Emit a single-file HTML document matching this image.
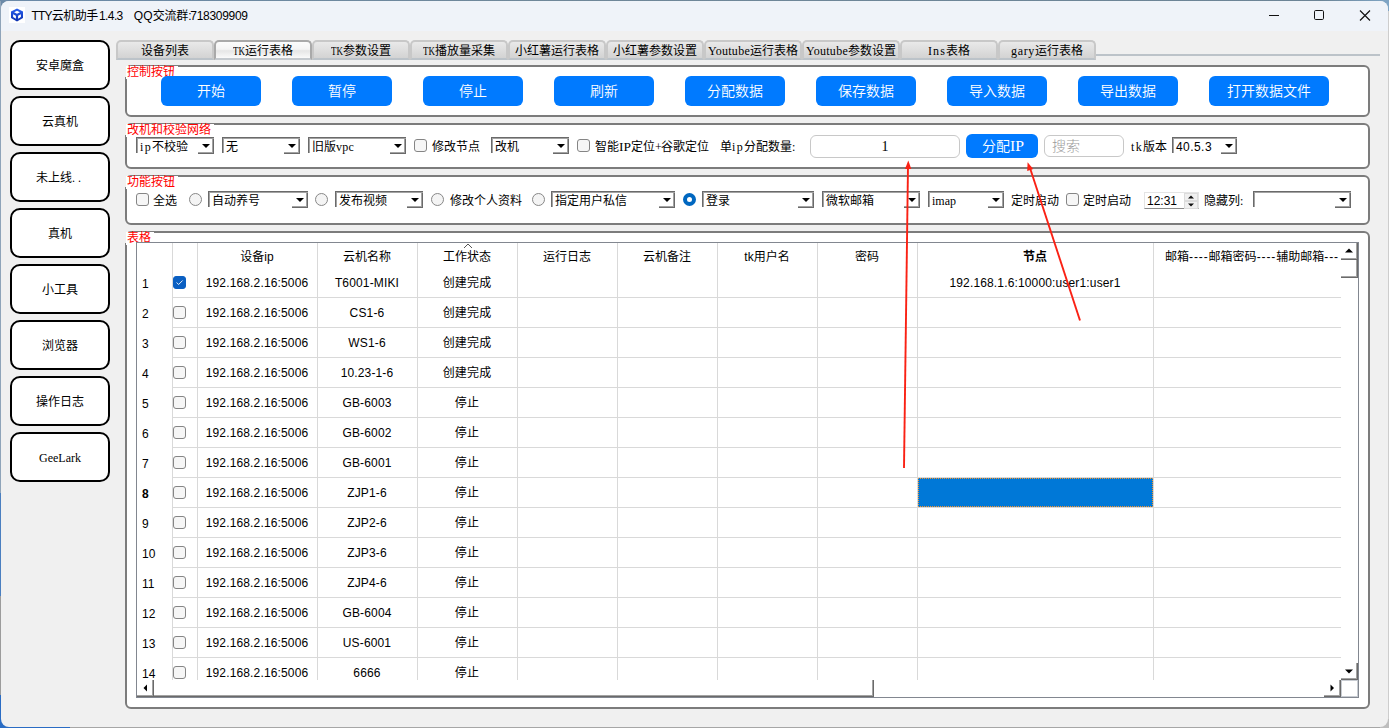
<!DOCTYPE html>
<html lang="zh-CN"><head><meta charset="utf-8"><title>TTY云机助手1.4.3</title>
<style>
*{box-sizing:border-box;margin:0;padding:0}
html,body{width:1389px;height:728px;overflow:hidden}
body{background:#a6a6a6;position:relative;font-family:"Liberation Sans","Noto Sans CJK SC",sans-serif;font-size:12px;color:#000}
.abs,.win *{position:absolute}
.win{position:absolute;left:1px;top:1px;width:1387px;height:726px;background:#f0f0f0;border-radius:8px 8px 8px 8px;overflow:hidden}
.tbar{left:0;top:0;width:1387px;height:30px;background:#eff3f9}
.title{left:30px;top:6px;height:18px;line-height:18px;font-size:12px;white-space:pre;width:230px}
.s{font-family:"Liberation Serif","Noto Sans CJK SC",serif;font-size:12px;font-weight:400;white-space:pre;line-height:14px;height:14px}
.s .l,.l{position:static;font-family:"Liberation Serif",serif;font-weight:400}
.win span{position:static}
.da{letter-spacing:.9px}
.d{font-family:"Liberation Sans",sans-serif;letter-spacing:-0.4px}
.sb{left:9px;width:100px;height:50px;border:2px solid #000;border-radius:10px;background:#fff;text-align:center;line-height:49px;height:50px}
.tab{top:39px;height:20px;width:98px;background:linear-gradient(#e9e9e9,#d3d3d3);border:2px solid #c8c8c8;border-bottom:2px solid #bcc3c9;border-radius:5px 5px 0 0;text-align:center;line-height:18px}
.tab.sel{top:39px;height:20px;background:linear-gradient(#fcfcfc,#f4f4f4 45%,#e6e6e6 55%,#fafafa);border:2px solid #a9a9a9;border-bottom:2px solid #c4c9ce;line-height:18px}
.gb{left:124px;width:1245px;background:#fff;border:2px solid #7c7c7c;border-radius:6px}
.gl{left:125px;background:#fff;color:#ff0000;width:53px;padding-left:1px;height:13px;line-height:13px}
.gcut{left:124px;width:3px;background:#f0f0f0;height:12px}
.bb{top:75px;width:100px;height:30px;background:#007aff;border-radius:6px;color:#fff;text-align:center;font-size:14px;line-height:31px;font-family:"Liberation Serif","Noto Sans CJK SC",serif;font-weight:350}
.cb{height:16px;background:#fff;border-top:1px solid #6a6a6a;border-left:1px solid #6a6a6a;box-shadow:inset 1px 1px 0 #a3a3a3}
.cb .t{left:3px;top:2px;line-height:14px}
.cb .ab{right:0;top:1px;width:16px;height:14px;border-right:1px solid #6a6a6a;border-bottom:1px solid #6a6a6a;box-shadow:inset -1px -1px 0 #a3a3a3;background:#fff}
.cb .ab:after{content:"";position:absolute;left:4px;top:5px;border-left:4px solid transparent;border-right:4px solid transparent;border-top:4px solid #000}
.ck{width:13px;height:13px;border:1px solid #858585;border-radius:3px;background:#f6f6f6}
.rd{width:13px;height:13px;border:1px solid #888;border-radius:50%;background:#f4f4f4}
.rd.on{border:4px solid #0067c0;background:#fff}
.tbl{left:135px;top:241px;width:1223px;height:456px;background:#fff;border:1px solid #828790}
.vl{width:1px;background:#d9d9d9;top:0;height:437px}
.hl{height:1px;background:#d9d9d9;left:35px;width:1169px}
.c{text-align:center;height:30px;line-height:30px;white-space:pre;letter-spacing:.15px}
.h{text-align:center;height:24px;line-height:26px;white-space:pre;top:1px}
.rn{left:5px;height:30px;line-height:32px}
</style></head><body>
<div class="abs" style="left:0;top:0;width:1389px;height:12px;background:linear-gradient(90deg,#6b8aa8,#6f8799 40%,#6c8496 95%,#7fa5c5)"></div>
<div class="abs" style="left:0;top:1px;width:1px;height:492px;background:#8fa4b9"></div>
<div class="abs" style="left:0;top:493px;width:1px;height:103px;background:#4a7fc0"></div>
<div class="abs" style="left:0;top:596px;width:1px;height:99px;background:#9c9c9c"></div>
<div class="abs" style="left:0;top:695px;width:8px;height:33px;background:#2a6cc4"></div>
<div class="abs" style="left:0;top:720px;width:70px;height:8px;background:#2a6cc4"></div>
<div class="abs" style="left:1381px;top:1px;width:8px;height:10px;background:#7fa5c5"></div>
<div class="abs" style="left:1388px;top:11px;width:1px;height:709px;background:#cdcdcd"></div>
<div class="abs" style="left:1380px;top:719px;width:9px;height:9px;background:#bdbdbd"></div>
<div class="win">

<div class="tbar"></div>
<svg style="left:8px;top:6px" width="16" height="16" viewBox="0 0 16 16"><defs><linearGradient id="ig" x1="0" y1="0" x2="0" y2="1"><stop offset="0" stop-color="#2a62f2"/><stop offset="1" stop-color="#0b2fae"/></linearGradient></defs><rect width="16" height="16" fill="#fff"/><path d="M8 1.4 L14 4.5 L14 10.9 L8 14.4 L2 10.9 L2 4.5 Z" fill="url(#ig)"/><path d="M8 3.7 L10.9 5.2 L8 6.7 L5.1 5.2 Z M4.1 7.3 L6.9 8.8 L6.9 11.8 L4.1 10.1 Z M11.9 7.3 L9.1 8.8 L9.1 11.8 L11.9 10.1 Z" fill="#fff"/></svg>
<div class="title"><span style="position:absolute;left:0.6px;letter-spacing:-0.92px">TTY</span><span style="position:absolute;left:20.7px;letter-spacing:-0.48px">云机助手</span><span style="position:absolute;left:68.0px;letter-spacing:-0.60px">1.4.3   </span><span style="position:absolute;left:102.8px;letter-spacing:0.01px">QQ</span><span style="position:absolute;left:121.7px;letter-spacing:-0.24px">交流群</span><span style="position:absolute;left:157.3px;letter-spacing:-1.34px">:</span><span style="position:absolute;left:159.3px;letter-spacing:-0.30px">718309909</span></div>
<svg style="left:1260px;top:0" width="127" height="30" viewBox="0 0 127 30"><g fill="none" stroke="#111" stroke-width="1"><path d="M8 14.5h10"/><rect x="53.5" y="9.5" width="9" height="9" rx="1.2"/><path d="M99 9.5l10 10M109 9.5l-10 10" stroke-width="1.15"/></g></svg>
<div class="sb s" style="top:39px">安卓魔盒</div>
<div class="sb s" style="top:95px">云真机</div>
<div class="sb s" style="top:151px">未上线<span class="l" style="letter-spacing:3.0px">..</span></div>
<div class="sb s" style="top:207px">真机</div>
<div class="sb s" style="top:263px">小工具</div>
<div class="sb s" style="top:319px">浏览器</div>
<div class="sb s" style="top:375px">操作日志</div>
<div class="sb s" style="top:431px"><span class="l" style="letter-spacing:0.0px">GeeLark</span></div>
<div style="left:1095px;top:53px;width:284px;height:2px;background:#bcc3c9"></div>
<div class="tab s" style="left:115px">设备列表</div>
<div class="tab s sel" style="left:213px"><span class="l" style="display:inline-block;width:12px;font-size:1.083em;transform:scaleX(0.692);transform-origin:0 50%">TK</span>运行表格</div>
<div class="tab s" style="left:311px"><span class="l" style="display:inline-block;width:12px;font-size:1.083em;transform:scaleX(0.692);transform-origin:0 50%">TK</span>参数设置</div>
<div class="tab s" style="left:409px"><span class="l" style="display:inline-block;width:12px;font-size:1.083em;transform:scaleX(0.692);transform-origin:0 50%">TK</span>播放量采集</div>
<div class="tab s" style="left:507px">小红薯运行表格</div>
<div class="tab s" style="left:605px">小红薯参数设置</div>
<div class="tab s" style="left:703px"><span class="l" style="letter-spacing:0.27px">Youtube</span>运行表格</div>
<div class="tab s" style="left:801px"><span class="l" style="letter-spacing:0.27px">Youtube</span>参数设置</div>
<div class="tab s" style="left:899px"><span class="l" style="letter-spacing:1.11px">Ins</span>表格</div>
<div class="tab s" style="left:997px"><span class="l" style="letter-spacing:0.67px">gary</span>运行表格</div>
<div class="gb" style="top:64px;height:52px"></div>
<div class="gcut" style="top:64px"></div>
<div class="gl s" style="top:65px;width:52px">控制按钮</div>
<div class="gb" style="top:122px;height:46px"></div>
<div class="gcut" style="top:122px"></div>
<div class="gl s" style="top:123px;width:88px">改机和校验网络</div>
<div class="gb" style="top:174px;height:50px"></div>
<div class="gcut" style="top:174px"></div>
<div class="gl s" style="top:175px;width:52px">功能按钮</div>
<div class="gb" style="top:230px;height:478px"></div>
<div class="gcut" style="top:230px"></div>
<div class="gl s" style="top:231px;width:28px">表格</div>
<div class="bb" style="left:160px">开始</div>
<div class="bb" style="left:291px">暂停</div>
<div class="bb" style="left:422px">停止</div>
<div class="bb" style="left:553px">刷新</div>
<div class="bb" style="left:684px">分配数据</div>
<div class="bb" style="left:815px">保存数据</div>
<div class="bb" style="left:946px">导入数据</div>
<div class="bb" style="left:1077px">导出数据</div>
<div class="bb" style="left:1208px;width:120px">打开数据文件</div>
<div class="cb" style="left:135px;top:136px;width:78px;height:16px"><div class="t s"><span class="l" style="letter-spacing:1.33px">ip</span>不校验</div><div class="ab" style="height:15px"></div></div>
<div class="cb" style="left:221px;top:136px;width:78px;height:16px"><div class="t s">无</div><div class="ab" style="height:15px"></div></div>
<div class="cb" style="left:307px;top:136px;width:98px;height:16px"><div class="t s">旧版<span class="l" style="letter-spacing:0.22px">vpc</span></div><div class="ab" style="height:15px"></div></div>
<div class="ck" style="left:413px;top:138px"></div>
<div class="s" style="left:431px;top:139px;">修改节点</div>
<div class="cb" style="left:490px;top:136px;width:78px;height:16px"><div class="t s">改机</div><div class="ab" style="height:15px"></div></div>
<div class="ck" style="left:576px;top:138px"></div>
<div class="s" style="left:594px;top:139px;">智能<span class="l" style="display:inline-block;width:12px;font-size:1.083em;transform:scaleX(1.038);transform-origin:0 50%">IP</span>定位<span class="l" style="letter-spacing:-0.78px">+</span>谷歌定位</div>
<div class="s" style="left:719px;top:139px;">单<span class="l" style="letter-spacing:1.33px">ip</span>分配数量<span class="l" style="letter-spacing:2.66px">:</span></div>
<div style="left:809px;top:134px;width:150px;height:23px;border:1px solid #c8c8c8;border-radius:6px;background:#fff;text-align:center;font-size:14px;line-height:21px;font-family:Liberation Serif,serif">1</div>
<div class="bb" style="left:965px;top:133px;width:72px;height:24px;line-height:23px">分配<span class="l" style="display:inline-block;width:12px;font-size:1.083em;transform:scaleX(1.038);transform-origin:0 50%">IP</span></div>
<div style="left:1043px;top:134px;width:80px;height:22px;border:1px solid #c8c8c8;border-radius:6px;background:#fff;font-size:14px;line-height:20px;padding-left:7px;color:#9a9a9a;font-weight:300" >搜索</div>
<div class="s" style="left:1130px;top:139px;"><span class="l" style="letter-spacing:1.33px">tk</span>版本</div>
<div class="cb" style="left:1171px;top:136px;width:65px;height:16px"><div class="t s"><span class="d" style="letter-spacing:0.44px">40.5.3</span></div><div class="ab" style="height:15px"></div></div>
<div class="ck" style="left:135px;top:192px"></div>
<div class="s" style="left:152px;top:193px;">全选</div>
<div class="rd" style="left:188px;top:192px"></div>
<div class="cb" style="left:207px;top:190px;width:100px;height:16px"><div class="t s">自动养号</div><div class="ab" style="height:15px"></div></div>
<div class="rd" style="left:314px;top:192px"></div>
<div class="cb" style="left:334px;top:190px;width:88px;height:16px"><div class="t s">发布视频</div><div class="ab" style="height:15px"></div></div>
<div class="rd" style="left:430px;top:192px"></div>
<div class="s" style="left:449px;top:193px;">修改个人资料</div>
<div class="rd" style="left:531px;top:192px"></div>
<div class="cb" style="left:550px;top:190px;width:124px;height:16px"><div class="t s">指定用户私信</div><div class="ab" style="height:15px"></div></div>
<div class="rd on" style="left:682px;top:192px"></div>
<div class="cb" style="left:701px;top:190px;width:112px;height:16px"><div class="t s">登录</div><div class="ab" style="height:15px"></div></div>
<div class="cb" style="left:821px;top:190px;width:98px;height:16px"><div class="t s">微软邮箱</div><div class="ab" style="height:15px"></div></div>
<div class="cb" style="left:927px;top:190px;width:76px;height:16px"><div class="t s"><span class="l" style="letter-spacing:0.0px">imap</span></div><div class="ab" style="height:15px"></div></div>
<div class="s" style="left:1010px;top:193px;">定时启动</div>
<div class="ck" style="left:1065px;top:192px"></div>
<div class="s" style="left:1082px;top:193px;">定时启动</div>
<div style="left:1143px;top:191px;width:55px;height:17px;background:#fff;border:1px solid #e4e4e4;border-bottom:1px solid #8a8a8a"><div class="s" style="left:2px;top:1px"><span class="d" style="letter-spacing:-0.01px">12:31</span></div><div style="left:39px;top:0;width:14px;height:8px;background:#f0f0f0;border:1px solid #dcdcdc"></div><div style="left:39px;top:8px;width:14px;height:8px;background:#f0f0f0;border:1px solid #dcdcdc"></div><svg style="left:39px;top:0" width="14" height="16" viewBox="0 0 14 16"><path d="M4 5.5 L7 2.5 L10 5.5 Z M4 10.5 L7 13.5 L10 10.5 Z" fill="#111"/></svg></div>
<div class="s" style="left:1203px;top:193px;">隐藏列<span class="l" style="letter-spacing:2.66px">:</span></div>
<div class="cb" style="left:1252px;top:190px;width:98px;height:16px"><div class="t s"></div><div class="ab" style="height:15px"></div></div>
<div class="tbl">
<div class="vl" style="left:35px"></div>
<div class="vl" style="left:60px"></div>
<div class="vl" style="left:180px"></div>
<div class="vl" style="left:280px"></div>
<div class="vl" style="left:380px"></div>
<div class="vl" style="left:480px"></div>
<div class="vl" style="left:580px"></div>
<div class="vl" style="left:680px"></div>
<div class="vl" style="left:780px"></div>
<div class="vl" style="left:1016px"></div>
<div class="hl" style="top:54px"></div>
<div class="hl" style="top:84px"></div>
<div class="hl" style="top:114px"></div>
<div class="hl" style="top:144px"></div>
<div class="hl" style="top:174px"></div>
<div class="hl" style="top:204px"></div>
<div class="hl" style="top:234px"></div>
<div class="hl" style="top:264px"></div>
<div class="hl" style="top:294px"></div>
<div class="hl" style="top:324px"></div>
<div class="hl" style="top:354px"></div>
<div class="hl" style="top:384px"></div>
<div class="hl" style="top:414px"></div>
<div class="h" style="left:60px;width:120px">设备ip</div>
<div class="h" style="left:180px;width:100px">云机名称</div>
<div class="h" style="left:280px;width:100px">工作状态</div>
<div class="h" style="left:380px;width:100px">运行日志</div>
<div class="h" style="left:480px;width:100px">云机备注</div>
<div class="h" style="left:580px;width:100px">tk用户名</div>
<div class="h" style="left:680px;width:100px">密码</div>
<div class="h" style="left:780px;width:236px;font-weight:bold">节点</div>
<div class="h" style="left:1028px;width:176px;text-align:left;overflow:hidden">邮箱<span class="da">----</span>邮箱密码<span class="da">----</span>辅助邮箱<span class="da">---</span></div>
<svg style="left:325px;top:0" width="12" height="6" viewBox="0 0 12 6"><path d="M2 5 L6 1 L10 5" fill="none" stroke="#555" stroke-width="1"/></svg>
<div style="left:0;top:0;width:1204px;height:437px;overflow:hidden">
<div class="rn" style="top:25px">1</div>
<div class="ck" style="left:36px;top:33px;background:#0a5fc2;border-color:#0a5fc2"><svg style="left:0;top:0" width="11" height="11" viewBox="0 0 11 11"><path d="M2.6 5.5 L4.6 7.5 L8.6 3.5" fill="none" stroke="#fff" stroke-width="0.9"/></svg></div>
<div class="c" style="left:60px;width:120px;top:25px">192.168.2.16:5006</div>
<div class="c" style="left:180px;width:100px;top:25px">T6001-MIKI</div>
<div class="c" style="left:280px;width:100px;top:25px">创建完成</div>
<div class="rn" style="top:55px">2</div>
<div class="ck" style="left:36px;top:63px"></div>
<div class="c" style="left:60px;width:120px;top:55px">192.168.2.16:5006</div>
<div class="c" style="left:180px;width:100px;top:55px">CS1-6</div>
<div class="c" style="left:280px;width:100px;top:55px">创建完成</div>
<div class="rn" style="top:85px">3</div>
<div class="ck" style="left:36px;top:93px"></div>
<div class="c" style="left:60px;width:120px;top:85px">192.168.2.16:5006</div>
<div class="c" style="left:180px;width:100px;top:85px">WS1-6</div>
<div class="c" style="left:280px;width:100px;top:85px">创建完成</div>
<div class="rn" style="top:115px">4</div>
<div class="ck" style="left:36px;top:123px"></div>
<div class="c" style="left:60px;width:120px;top:115px">192.168.2.16:5006</div>
<div class="c" style="left:180px;width:100px;top:115px">10.23-1-6</div>
<div class="c" style="left:280px;width:100px;top:115px">创建完成</div>
<div class="rn" style="top:145px">5</div>
<div class="ck" style="left:36px;top:153px"></div>
<div class="c" style="left:60px;width:120px;top:145px">192.168.2.16:5006</div>
<div class="c" style="left:180px;width:100px;top:145px">GB-6003</div>
<div class="c" style="left:280px;width:100px;top:145px">停止</div>
<div class="rn" style="top:175px">6</div>
<div class="ck" style="left:36px;top:183px"></div>
<div class="c" style="left:60px;width:120px;top:175px">192.168.2.16:5006</div>
<div class="c" style="left:180px;width:100px;top:175px">GB-6002</div>
<div class="c" style="left:280px;width:100px;top:175px">停止</div>
<div class="rn" style="top:205px">7</div>
<div class="ck" style="left:36px;top:213px"></div>
<div class="c" style="left:60px;width:120px;top:205px">192.168.2.16:5006</div>
<div class="c" style="left:180px;width:100px;top:205px">GB-6001</div>
<div class="c" style="left:280px;width:100px;top:205px">停止</div>
<div class="rn" style="top:235px;font-weight:bold">8</div>
<div class="ck" style="left:36px;top:243px"></div>
<div class="c" style="left:60px;width:120px;top:235px">192.168.2.16:5006</div>
<div class="c" style="left:180px;width:100px;top:235px">ZJP1-6</div>
<div class="c" style="left:280px;width:100px;top:235px">停止</div>
<div class="rn" style="top:265px">9</div>
<div class="ck" style="left:36px;top:273px"></div>
<div class="c" style="left:60px;width:120px;top:265px">192.168.2.16:5006</div>
<div class="c" style="left:180px;width:100px;top:265px">ZJP2-6</div>
<div class="c" style="left:280px;width:100px;top:265px">停止</div>
<div class="rn" style="top:295px">10</div>
<div class="ck" style="left:36px;top:303px"></div>
<div class="c" style="left:60px;width:120px;top:295px">192.168.2.16:5006</div>
<div class="c" style="left:180px;width:100px;top:295px">ZJP3-6</div>
<div class="c" style="left:280px;width:100px;top:295px">停止</div>
<div class="rn" style="top:325px">11</div>
<div class="ck" style="left:36px;top:333px"></div>
<div class="c" style="left:60px;width:120px;top:325px">192.168.2.16:5006</div>
<div class="c" style="left:180px;width:100px;top:325px">ZJP4-6</div>
<div class="c" style="left:280px;width:100px;top:325px">停止</div>
<div class="rn" style="top:355px">12</div>
<div class="ck" style="left:36px;top:363px"></div>
<div class="c" style="left:60px;width:120px;top:355px">192.168.2.16:5006</div>
<div class="c" style="left:180px;width:100px;top:355px">GB-6004</div>
<div class="c" style="left:280px;width:100px;top:355px">停止</div>
<div class="rn" style="top:385px">13</div>
<div class="ck" style="left:36px;top:393px"></div>
<div class="c" style="left:60px;width:120px;top:385px">192.168.2.16:5006</div>
<div class="c" style="left:180px;width:100px;top:385px">US-6001</div>
<div class="c" style="left:280px;width:100px;top:385px">停止</div>
<div class="rn" style="top:415px">14</div>
<div class="ck" style="left:36px;top:423px"></div>
<div class="c" style="left:60px;width:120px;top:415px">192.168.2.16:5006</div>
<div class="c" style="left:180px;width:100px;top:415px">6666</div>
<div class="c" style="left:280px;width:100px;top:415px">停止</div>
<div class="c" style="left:780px;width:236px;top:25px">192.168.1.6:10000:user1:user1</div>
<div style="left:781px;top:235px;width:235px;height:29px;background:#0078d7;border:1px dotted #f5952e"></div>
</div>
<div style="left:1204px;top:0;width:17px;height:437px;background:#fff"></div>
<div style="left:1204px;top:0;width:17px;height:17px;border-right:1px solid #6a6a6a;border-bottom:1px solid #6a6a6a;box-shadow:inset -1px -1px 0 #a3a3a3"><svg style="left:4px;top:5px" width="8" height="5"><path d="M0 4.5 L4 0.5 L8 4.5Z" fill="#000"/></svg></div>
<div style="left:1204px;top:17px;width:17px;height:18px;border-right:1px solid #6a6a6a;border-bottom:1px solid #6a6a6a;box-shadow:inset -1px -1px 0 #a3a3a3"></div>
<div style="left:1204px;top:420px;width:17px;height:17px;border-right:1px solid #6a6a6a;border-bottom:1px solid #6a6a6a;box-shadow:inset -1px -1px 0 #a3a3a3"><svg style="left:4px;top:6px" width="8" height="5"><path d="M0 0.5 L4 4.5 L8 0.5Z" fill="#000"/></svg></div>
<div style="left:0;top:437px;width:1221px;height:17px;background:#fff"></div>
<div style="left:0;top:437px;width:17px;height:17px;border-right:1px solid #6a6a6a;border-bottom:1px solid #6a6a6a;box-shadow:inset -1px -1px 0 #a3a3a3"><svg style="left:6px;top:4px" width="5" height="8"><path d="M4 0.5 L0.5 4 L4 7.5Z" fill="#000"/></svg></div>
<div style="left:17px;top:437px;width:720px;height:17px;border-right:1px solid #6a6a6a;border-bottom:1px solid #6a6a6a;box-shadow:inset -1px -1px 0 #a3a3a3"></div>
<div style="left:1187px;top:437px;width:17px;height:17px;border-right:1px solid #6a6a6a;border-bottom:1px solid #6a6a6a;box-shadow:inset -1px -1px 0 #a3a3a3"><svg style="left:6px;top:4px" width="5" height="8"><path d="M0.5 0.5 L4 4 L0.5 7.5Z" fill="#000"/></svg></div>
<div style="left:1204px;top:437px;width:17px;height:17px;border:1px solid #c8ccd2;background:#fff"></div>
</div>
<svg style="left:0;top:0" width="1387" height="726" viewBox="1 1 1387 726"><g stroke="#fa2114" stroke-width="1.9" fill="#fa2114"><line x1="904" y1="468" x2="908" y2="166"/><path d="M908.3 160.5 L905 169 L911.3 169 Z" stroke="none"/><line x1="1080" y1="320.5" x2="1030" y2="168"/><path d="M1027.6 162.2 L1027.2 171 L1033.2 169 Z" stroke="none"/></g></svg>
</div></body></html>
